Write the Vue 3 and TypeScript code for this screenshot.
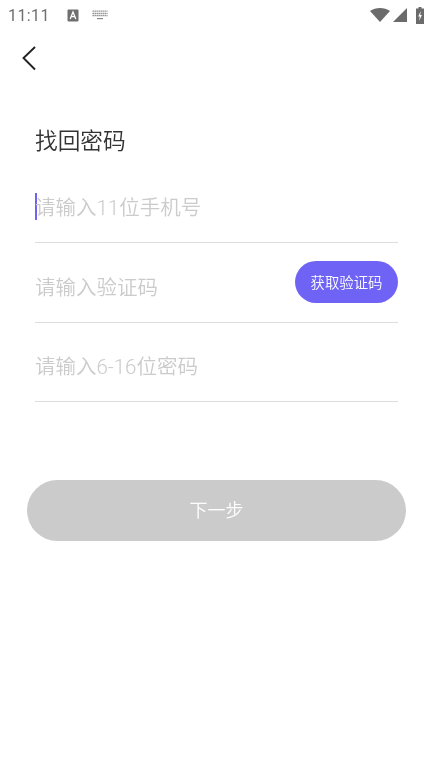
<script setup lang="ts">
const fields = [
  { id: 1, text: '请输入11位手机号', caret: true, code: false },
  { id: 2, text: '请输入验证码', caret: false, code: true },
  { id: 3, text: '请输入6-16位密码', caret: false, code: false },
]
</script>

<template>
  <div class="page">
    <div class="status">
      <span class="time">11:11</span>
      <svg class="a-icon" width="12" height="13" viewBox="0 0 12 13">
        <rect x="0.5" y="0.5" width="11" height="12" rx="1" fill="#6f6f6f" />
        <path d="M3.2 10 L6 3 L8.8 10 M4.3 7.6 H7.7" stroke="#fff" stroke-width="1.3" fill="none" />
      </svg>
      <svg class="kb-icon" width="16" height="10" viewBox="0 0 16 10">
        <path d="M0.5 1.2H15.5M0.5 3.5H15.5M0.5 5.7H15.5" stroke="#8a8a8a" stroke-width="1.3" stroke-dasharray="1.4 0.6" />
        <path d="M5 8.6H11" stroke="#8a8a8a" stroke-width="1.2" />
      </svg>
      <span class="spacer"></span>
      <svg width="20" height="14" viewBox="0 0 20 14">
        <path d="M0 3 C5.5 -0.9 14.5 -0.9 20 3 L10 14 Z" fill="#6b6b6b" />
      </svg>
      <svg class="signal" width="14" height="14" viewBox="0 0 14 14">
        <path d="M14 0 V14 H0 Z" fill="#6b6b6b" />
      </svg>
      <svg class="battery" width="8" height="17" viewBox="0 0 8 17">
        <path d="M2.5 0 H5.5 V1.5 H8 V17 H0 V1.5 H2.5 Z" fill="#6b6b6b" />
        <path d="M4.8 4 L2.2 9.6 H3.8 L3.1 14 L5.9 8 H4.2 Z" fill="#fff" />
      </svg>
    </div>

    <div class="nav">
      <svg width="16" height="26" viewBox="0 0 16 26">
        <path d="M14 2 L2.5 13 L14 24.5" stroke="#222" stroke-width="1.9" fill="none" />
      </svg>
    </div>

    <main class="form">
      <h1 class="title">找回密码</h1>
      <div v-for="f in fields" :key="f.id" class="field">
        <i v-if="f.caret" class="caret"></i>
        <span class="placeholder">{{ f.text }}</span>
        <button v-if="f.code" class="code-btn"><span class="label">获取验证码</span></button>
      </div>
    </main>

    <button class="next"><span class="label">下一步</span></button>
  </div>
</template>

<style>
html, body { margin: 0; background: #fff; }
</style>

<style scoped>
.page {
  width: 433px;
  height: 771px;
  overflow: hidden;
  background: #fff;
  font-family: Roboto, "Noto Sans CJK SC", sans-serif;
}
.time, .title, .placeholder, .label {
  opacity: 0.999;
  will-change: opacity;
}
.label { display: inline-block; }
.status {
  height: 30px;
  display: flex;
  align-items: center;
  padding: 0 9px 0 8px;
  box-sizing: border-box;
}
.time {
  font-size: 16px;
  letter-spacing: 0.4px;
  color: #6f6f6f;
}
.a-icon { margin-left: 17px; }
.kb-icon { margin-left: 13px; }
.spacer { flex: 1; }
.signal { margin-left: 3px; }
.battery { margin-left: 9px; }
.nav {
  height: 56px;
  display: flex;
  align-items: center;
  padding-left: 21px;
}
.form {
  padding: 38px 35px 0;
}
.title {
  margin: 0;
  height: 36px;
  line-height: 36px;
  font-size: 22.7px;
  font-weight: 350;
  color: #333;
}
.field {
  position: relative;
  height: 79.5px;
  box-sizing: border-box;
  display: flex;
  align-items: flex-end;
  justify-content: space-between;
  border-bottom: 1px solid #ddd;
  padding-bottom: 19px;
}
.field:first-of-type { height: 83px; }
.placeholder {
  line-height: 30px;
  font-size: 20.5px;
  font-weight: 350;
  color: #cbcbcb;
}
.caret {
  position: absolute;
  left: 0;
  top: 33px;
  width: 2px;
  height: 27px;
  background: #6f63f5;
}
.code-btn {
  width: 103px;
  height: 42px;
  border: 0;
  border-radius: 21px;
  background: #6f63f5;
  color: #fff;
  padding: 0;
  font: inherit;
  font-size: 14.4px;
  font-weight: 350;
}
.next {
  display: block;
  width: 379px;
  height: 61px;
  margin: 78px 0 0 27px;
  border: 0;
  border-radius: 31px;
  background: #cbcbcb;
  color: #fff;
  padding: 0 0 4px;
  font: inherit;
  font-size: 18px;
  font-weight: 350;
}
</style>
